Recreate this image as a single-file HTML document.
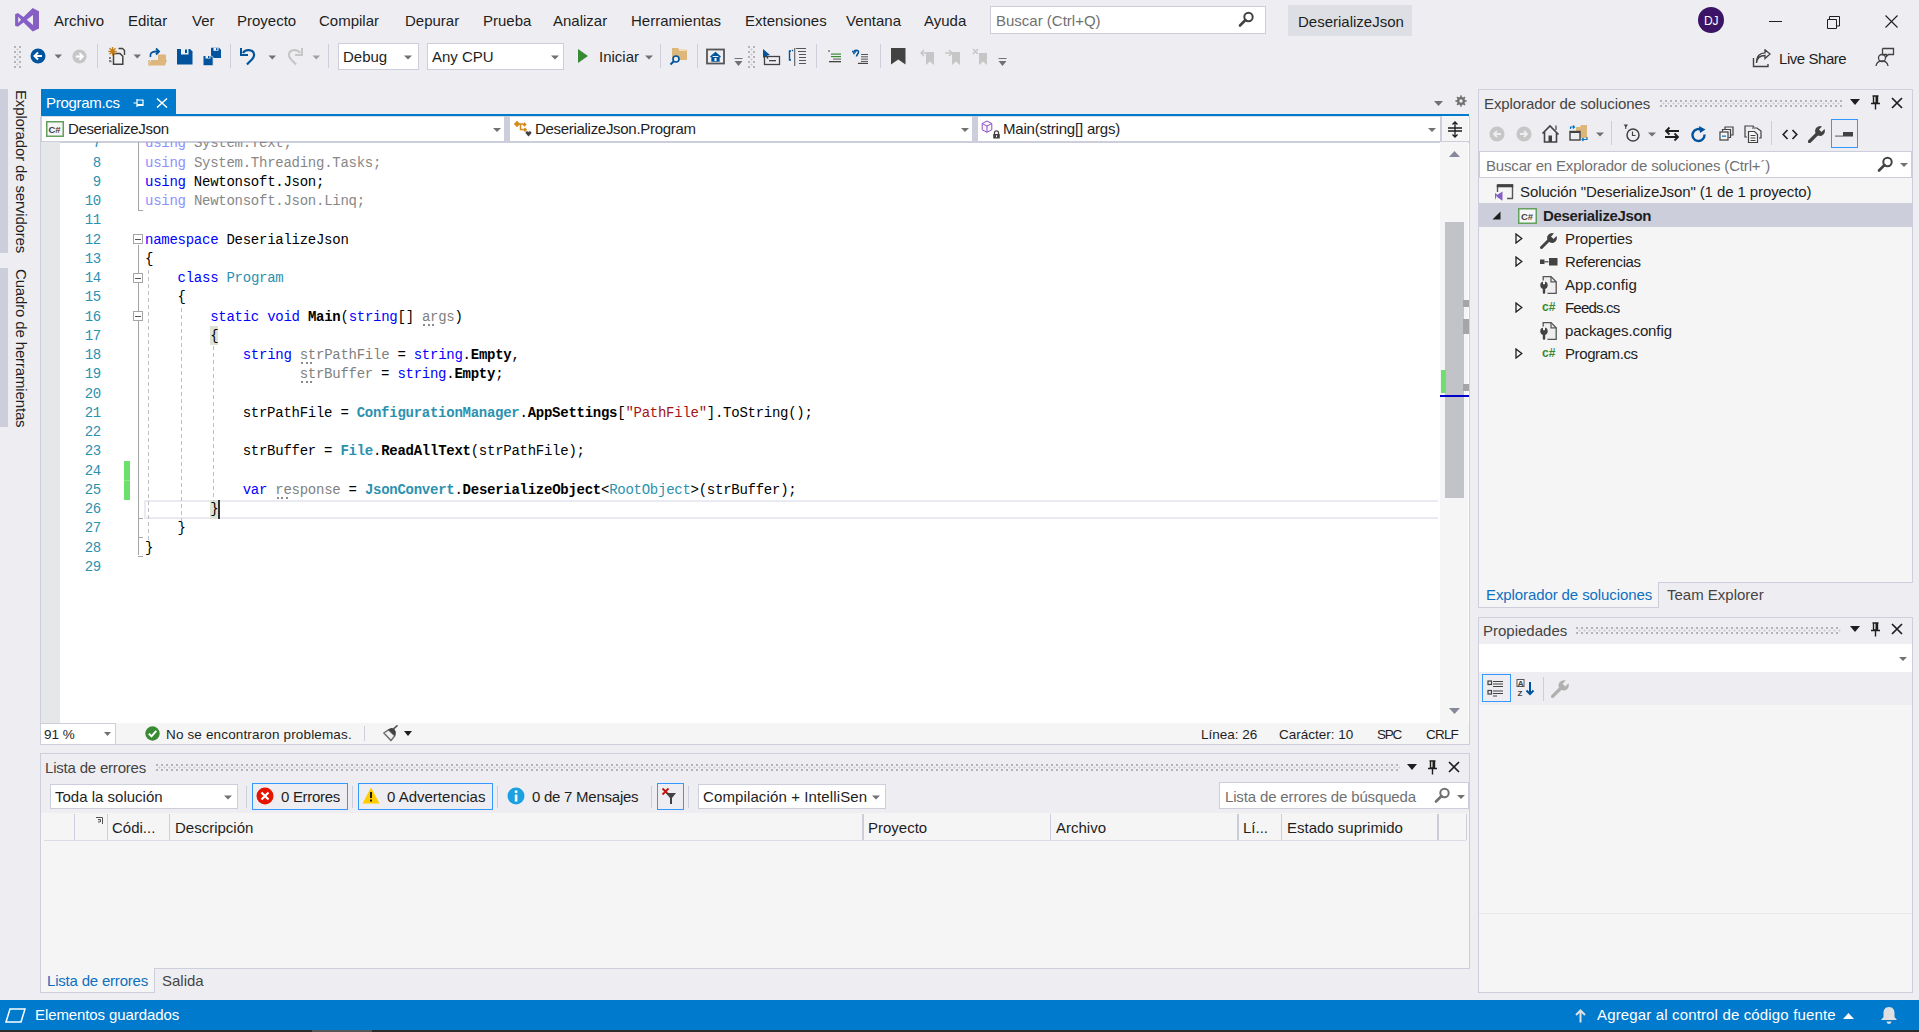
<!DOCTYPE html>
<html><head><meta charset="utf-8">
<style>
*{box-sizing:border-box;margin:0;padding:0}
html,body{width:1919px;height:1032px;overflow:hidden;background:#EEEEF2;font-family:"Liberation Sans",sans-serif;font-size:15px;color:#1E1E1E;position:relative}
.a{position:absolute}
.t{position:absolute;white-space:pre;line-height:1}
.cl{position:absolute;left:0;white-space:pre;font-family:"Liberation Mono",monospace;font-size:14px;letter-spacing:-0.26px;line-height:19px;color:#000}
.lnum{position:absolute;left:0;width:60px;text-align:right;font-family:"Liberation Mono",monospace;font-size:14px;letter-spacing:-0.26px;line-height:19px;color:#2B91AF}
.kw{color:#0000FF}
.ty{color:#2B91AF}
.st{color:#A31515}
.b{font-weight:bold}
.fk{color:#8F8FFF}
.fg{color:#878787}
.un{color:#7F7F7F}
.ico{position:absolute}
</style></head>
<body>
<!-- MENU BAR -->
<svg class="a" style="left:10px;top:4px" width="34" height="32" viewBox="0 0 34 32"><path d="M22.7 4 L29 7.3 V24.5 L22.7 27.6 L13.5 18.6 L7.8 22.8 L5.1 21.7 V10.2 L7.8 9 L13.5 13 Z M23 10.9 L16.8 15.8 L23 21.1 Z M8.2 12.7 V18.9 L11 15.8 Z" fill="#865FC5" fill-rule="evenodd"/></svg>
<span class="t" style="left:54px;top:13px">Archivo</span>
<span class="t" style="left:128px;top:13px">Editar</span>
<span class="t" style="left:192px;top:13px">Ver</span>
<span class="t" style="left:237px;top:13px">Proyecto</span>
<span class="t" style="left:319px;top:13px">Compilar</span>
<span class="t" style="left:405px;top:13px">Depurar</span>
<span class="t" style="left:483px;top:13px">Prueba</span>
<span class="t" style="left:553px;top:13px">Analizar</span>
<span class="t" style="left:631px;top:13px">Herramientas</span>
<span class="t" style="left:745px;top:13px">Extensiones</span>
<span class="t" style="left:846px;top:13px">Ventana</span>
<span class="t" style="left:924px;top:13px">Ayuda</span>
<div class="a" style="left:990px;top:6px;width:276px;height:28px;background:#fff;border:1px solid #CCCEDB"></div>
<span class="t" style="left:996px;top:13px;color:#717171">Buscar (Ctrl+Q)</span>
<svg class="a" style="left:1238px;top:11px" width="17" height="17" viewBox="0 0 17 17"><circle cx="10.5" cy="6" r="4.2" fill="none" stroke="#424242" stroke-width="2"/><path d="M7.5 9 L2 14.5" stroke="#424242" stroke-width="2.6" stroke-linecap="round"/></svg>
<div class="a" style="left:1288px;top:5px;width:124px;height:31px;background:#DDDFE5"></div>
<span class="t" style="left:1298px;top:14px">DeserializeJson</span>
<div class="a" style="left:1698px;top:7px;width:26px;height:26px;border-radius:50%;background:#3B1466"></div>
<span class="t" style="left:1704px;top:15px;color:#fff;font-size:12px;letter-spacing:-0.2px">DJ</span>
<div class="a" style="left:1769px;top:21px;width:13px;height:1px;background:#1E1E1E"></div>
<svg class="a" style="left:1826px;top:15px" width="15" height="15" viewBox="0 0 15 15"><path d="M1.5 4.5 H10.5 V13.5 H1.5 Z M3.5 4.5 V1.5 H13.5 V11 H10.5" fill="none" stroke="#1E1E1E" stroke-width="1"/></svg>
<svg class="a" style="left:1885px;top:15px" width="13" height="13" viewBox="0 0 13 13"><path d="M0.5 0.5 L12.5 12.5 M12.5 0.5 L0.5 12.5" stroke="#1E1E1E" stroke-width="1.1"/></svg>
<!-- TOOLBAR -->
<div class="a" style="left:14px;top:46px;width:7px;height:22px;background-image:radial-gradient(circle at 1px 1px,#B4B4B8 0.9px,transparent 1.2px),radial-gradient(circle at 3.5px 3.5px,#CDCDD2 0.9px,transparent 1.2px);background-size:5px 5px"></div>
<!-- back -->
<svg class="a" style="left:29px;top:47px" width="18" height="18" viewBox="0 0 18 18"><circle cx="9" cy="9" r="7.5" fill="#00539C"/><path d="M13 9 H6 M9 5.5 L5.5 9 L9 12.5" stroke="#fff" stroke-width="2" fill="none"/></svg>
<svg class="a" style="left:54px;top:54px" width="9" height="5" viewBox="0 0 9 5"><path d="M0.5 0.5 H8 L4.25 4.5Z" fill="#717171"/></svg>
<svg class="a" style="left:71px;top:48px" width="17" height="17" viewBox="0 0 18 18"><circle cx="9" cy="9" r="7.5" fill="#C6C6C6"/><path d="M5 9 H12 M9 5.5 L12.5 9 L9 12.5" stroke="#fff" stroke-width="2" fill="none"/></svg>
<div class="a" style="left:97px;top:44px;width:1px;height:24px;background:#CCCEDB"></div>
<!-- new project -->
<svg class="a" style="left:107px;top:46px" width="20" height="20" viewBox="0 0 20 20"><path d="M11.5 2.5 H15.5 L17.5 4.5 V9" fill="none" stroke="#424242" stroke-width="1.4"/><path d="M6.5 7.5 H13 L15.8 10.3 V18.3 H6.5 Z" fill="#F0EFF1" stroke="#424242" stroke-width="1.5"/><path d="M3 11 V15.5 H5" fill="none" stroke="#424242" stroke-width="1.3" stroke-dasharray="2 1"/><path d="M5.5 1 V9.5 M1.3 5.3 H9.7 M2.5 2.3 L8.5 8.3 M8.5 2.3 L2.5 8.3" stroke="#C27D1A" stroke-width="1.3"/></svg>
<svg class="a" style="left:133px;top:54px" width="9" height="5" viewBox="0 0 9 5"><path d="M0.5 0.5 H8 L4.25 4.5Z" fill="#717171"/></svg>
<!-- open -->
<svg class="a" style="left:148px;top:47px" width="20" height="20" viewBox="0 0 20 20"><path d="M10 7.5 H17 Q18 7.5 18 8.5 V13 H10Z" fill="#DCB67A"/><path d="M3 13 H19 L17 18.5 H1Z" fill="#DCB67A"/><path d="M1 13 V18.5" stroke="#DCB67A" stroke-width="1.5"/><path d="M2.5 10 C1.5 6.5 4 4.5 8 4.5 H10" stroke="#00539C" stroke-width="1.8" fill="none"/><path d="M8 1.5 L11 4.5 L8 7.5" stroke="#00539C" stroke-width="1.8" fill="none"/></svg>
<!-- save -->
<svg class="a" style="left:177px;top:49px" width="16" height="16" viewBox="0 0 16 16"><path d="M0 0 H13 L15.5 2.5 V15.5 H0 Z" fill="#00539C"/><rect x="4" y="0" width="7.5" height="5.5" fill="#EEEEF2"/><rect x="8" y="0.5" width="2" height="3.5" fill="#00539C"/></svg>
<!-- save all -->
<svg class="a" style="left:203px;top:47px" width="19" height="19" viewBox="0 0 19 19"><path d="M8 0.8 H16 L18 2.8 V11 H8 Z" fill="#00539C"/><rect x="10.5" y="0.8" width="5" height="3" fill="#EEEEF2"/><rect x="13" y="1.2" width="1.4" height="2" fill="#00539C"/><path d="M0 8.5 H8 L10.2 10.7 V18.8 H0 Z" fill="#00539C" stroke="#EEEEF2" stroke-width="1"/><rect x="2.5" y="8.5" width="5" height="3" fill="#EEEEF2"/><rect x="5" y="9" width="1.4" height="2" fill="#00539C"/></svg>
<div class="a" style="left:230px;top:44px;width:1px;height:24px;background:#CCCEDB"></div>
<!-- undo -->
<svg class="a" style="left:240px;top:46px" width="18" height="20" viewBox="0 0 18 20"><path d="M3 7 C5 3 13 3 14 8 C15 12 11 14 7 18.5" stroke="#00539C" stroke-width="2.2" fill="none"/><path d="M1 2 V9 H8" stroke="#00539C" stroke-width="2" fill="none"/></svg>
<svg class="a" style="left:268px;top:55px" width="9" height="5" viewBox="0 0 9 5"><path d="M0.5 0.5 H8 L4.25 4.5Z" fill="#717171"/></svg>
<svg class="a" style="left:285px;top:46px" width="18" height="20" viewBox="0 0 18 20"><path d="M15 7 C13 3 5 3 4 8 C3 12 7 14 11 18.5" stroke="#C6C6C6" stroke-width="2.2" fill="none"/><path d="M17 2 V9 H10" stroke="#C6C6C6" stroke-width="2" fill="none"/></svg>
<svg class="a" style="left:312px;top:55px" width="9" height="5" viewBox="0 0 9 5"><path d="M0.5 0.5 H8 L4.25 4.5Z" fill="#A0A0A0"/></svg>
<div class="a" style="left:328px;top:44px;width:1px;height:24px;background:#CCCEDB"></div>
<!-- Debug combo -->
<div class="a" style="left:338px;top:43px;width:81px;height:27px;background:#fff;border:1px solid #CCCEDB"></div>
<span class="t" style="left:343px;top:49px">Debug</span>
<svg class="a" style="left:404px;top:55px" width="8" height="5" viewBox="0 0 8 5"><path d="M0 0.5 H8 L4 4.5Z" fill="#717171"/></svg>
<div class="a" style="left:427px;top:43px;width:137px;height:27px;background:#fff;border:1px solid #CCCEDB"></div>
<span class="t" style="left:432px;top:49px">Any CPU</span>
<svg class="a" style="left:551px;top:55px" width="8" height="5" viewBox="0 0 8 5"><path d="M0 0.5 H8 L4 4.5Z" fill="#717171"/></svg>
<!-- start -->
<svg class="a" style="left:577px;top:48px" width="12" height="16" viewBox="0 0 12 16"><path d="M1 1 L11 8 L1 15Z" fill="#388A34"/></svg>
<span class="t" style="left:599px;top:49px">Iniciar</span>
<svg class="a" style="left:645px;top:55px" width="8" height="5" viewBox="0 0 8 5"><path d="M0 0.5 H8 L4 4.5Z" fill="#717171"/></svg>
<div class="a" style="left:660px;top:44px;width:1px;height:24px;background:#CCCEDB"></div>
<!-- find in files -->
<svg class="a" style="left:669px;top:47px" width="20" height="19" viewBox="0 0 20 19"><path d="M3 1 H9 L10.5 3 H18 V13 H3 Z" fill="#DCB67A"/><rect x="10" y="2" width="7" height="2" fill="#F1DDB8"/><circle cx="7" cy="12" r="3" fill="#EEEEF2" stroke="#00539C" stroke-width="1.6"/><path d="M5 14 L1.5 17.5" stroke="#00539C" stroke-width="2"/></svg>
<div class="a" style="left:697px;top:44px;width:1px;height:24px;background:#CCCEDB"></div>
<!-- home window -->
<svg class="a" style="left:706px;top:48px" width="20" height="18" viewBox="0 0 20 18"><rect x="1" y="1.5" width="17" height="14" fill="none" stroke="#555" stroke-width="1.8"/><path d="M4.5 9 L9.5 4.5 L14.5 9 M6 8 V13 H13 V8" fill="#00539C" stroke="#00539C" stroke-width="1.3"/><rect x="8.5" y="10" width="2" height="3" fill="#fff"/></svg>
<svg class="a" style="left:734px;top:58px" width="9" height="9" viewBox="0 0 9 9"><rect x="0.5" y="0" width="8" height="1" fill="#717171"/><path d="M0.5 3 H8.5 L4.5 8Z" fill="#717171"/></svg>
<div class="a" style="left:748px;top:46px;width:7px;height:22px;background-image:radial-gradient(circle at 1px 1px,#B4B4B8 0.9px,transparent 1.2px),radial-gradient(circle at 3.5px 3.5px,#CDCDD2 0.9px,transparent 1.2px);background-size:5px 5px"></div>
<!-- select cursor icon -->
<svg class="a" style="left:762px;top:48px" width="19" height="18" viewBox="0 0 19 18"><path d="M1 1 L1 10 L3.5 8 L5.5 11 L6.5 10.5 L5 7.5 L8 7Z" fill="#00539C"/><rect x="2.5" y="8.5" width="15" height="8" fill="none" stroke="#424242" stroke-width="1.3"/><rect x="7" y="12" width="7" height="1.3" fill="#424242"/></svg>
<!-- bracket lines icon -->
<svg class="a" style="left:788px;top:47px" width="20" height="20" viewBox="0 0 20 20"><path d="M3 4 H1.5 V13 H3" stroke="#00539C" stroke-width="1.4" fill="none"/><path d="M4 4 L5 3" stroke="#00539C" stroke-width="1.2"/><rect x="6" y="1" width="1.3" height="18" fill="#717171"/><path d="M8 1.5 H18 M10 4.5 H18 M11 7.5 H18 M11 10.5 H18 M11 13.5 H18 M11 16.5 H18" stroke="#555" stroke-width="1.2"/></svg>
<div class="a" style="left:816px;top:44px;width:1px;height:24px;background:#CCCEDB"></div>
<!-- indent -->
<svg class="a" style="left:828px;top:50px" width="14" height="13" viewBox="0 0 14 13"><rect x="0" y="0.5" width="2" height="1" fill="#424242"/><rect x="3" y="3.5" width="10" height="1.2" fill="#388A34"/><rect x="3" y="6" width="10" height="1.2" fill="#388A34"/><rect x="5" y="8.5" width="8" height="1.2" fill="#717171"/><rect x="1" y="11" width="12" height="1.3" fill="#424242"/></svg>
<svg class="a" style="left:852px;top:49px" width="17" height="15" viewBox="0 0 17 15"><path d="M2 3 C2 0.8 6.5 0.5 6.5 3 C6.5 5 4.5 5.5 4.5 7.5" stroke="#00539C" stroke-width="1.6" fill="none"/><path d="M0.3 1.8 L2 4.8 L4.2 2" stroke="#00539C" stroke-width="1.2" fill="none"/><rect x="9" y="5" width="7" height="1" fill="#555"/><rect x="9" y="7.3" width="7" height="1" fill="#555"/><rect x="9" y="9.6" width="7" height="1" fill="#555"/><rect x="9" y="11.9" width="7" height="1" fill="#555"/><rect x="6" y="13.8" width="10" height="1.2" fill="#424242"/></svg>
<div class="a" style="left:880px;top:44px;width:1px;height:24px;background:#CCCEDB"></div>
<!-- bookmarks -->
<svg class="a" style="left:891px;top:48px" width="15" height="17" viewBox="0 0 15 17"><path d="M0 0 H14.5 V16.5 L7.25 11.5 L0 16.5Z" fill="#424242"/></svg>
<svg class="a" style="left:920px;top:48px" width="15" height="17" viewBox="0 0 15 17"><path d="M6 4 H14 V17 L10 13.5 L6 17Z" fill="#C6C6C6"/><path d="M7 5 H1 M4 2 L1 5 L4 8" stroke="#C6C6C6" stroke-width="1.5" fill="none"/></svg>
<svg class="a" style="left:945px;top:48px" width="16" height="17" viewBox="0 0 16 17"><path d="M7 4 H15 V17 L11 13.5 L7 17Z" fill="#C6C6C6"/><path d="M0 5 H7 M4 2 L7 5 L4 8" stroke="#C6C6C6" stroke-width="1.5" fill="none"/></svg>
<svg class="a" style="left:972px;top:48px" width="16" height="17" viewBox="0 0 16 17"><path d="M7 5 H15 V17 L11 13.5 L7 17Z" fill="#C6C6C6"/><path d="M1 1 L6 6 M6 1 L1 6" stroke="#C6C6C6" stroke-width="1.5"/></svg>
<svg class="a" style="left:998px;top:58px" width="9" height="9" viewBox="0 0 9 9"><rect x="0.5" y="0" width="8" height="1" fill="#717171"/><path d="M0.5 3 H8.5 L4.5 8Z" fill="#717171"/></svg>
<!-- live share -->
<svg class="a" style="left:1752px;top:49px" width="20" height="19" viewBox="0 0 20 19"><path d="M1.5 9 V17.5 H16 V15" stroke="#424242" stroke-width="1.4" fill="none"/><path d="M4.5 14 C5 8 9 6.5 13 6.5 V9.5 L18 5 L13 0.8 V3.8 C8 3.8 4.5 7 4.5 14Z" fill="none" stroke="#424242" stroke-width="1.3"/></svg>
<span class="t" style="left:1779px;top:51px;letter-spacing:-0.45px">Live Share</span>
<svg class="a" style="left:1875px;top:47px" width="20" height="20" viewBox="0 0 20 20"><circle cx="7" cy="11" r="3.5" fill="none" stroke="#424242" stroke-width="1.3"/><path d="M1 19 C1.5 15.5 4 14 7 14 C10 14 12.5 15.5 13 19" fill="none" stroke="#424242" stroke-width="1.3"/><path d="M7.5 1.5 H18.5 V7.5 H13.5 L11.5 9.5 V7.5 H7.5 V1.5" fill="none" stroke="#424242" stroke-width="1.3"/></svg>
<!-- LEFT SIDE TABS -->
<div class="a" style="left:0;top:89px;width:8px;height:164px;background:#CCCEDB"></div>
<div class="a" style="left:0;top:268px;width:8px;height:159px;background:#CCCEDB"></div>
<span class="t" style="left:29px;top:90px;transform-origin:0 0;transform:rotate(90deg);letter-spacing:-0.15px">Explorador de servidores</span>
<span class="t" style="left:29px;top:269px;transform-origin:0 0;transform:rotate(90deg);letter-spacing:-0.15px">Cuadro de herramientas</span>
<!-- DOC TAB -->
<div class="a" style="left:41px;top:89px;width:135px;height:27px;background:#007ACC"></div>
<span class="t" style="left:46px;top:95px;color:#fff;letter-spacing:-0.3px">Program.cs</span>
<div class="a" style="left:41px;top:114px;width:1428px;height:2px;background:#007ACC"></div>
<!-- nav bar -->
<div class="a" style="left:40px;top:116px;width:1430px;height:27px;background:#fff;border-left:2px solid #CCCEDB;border-right:1px solid #CCCEDB;border-bottom:2px solid #CCCEDB"></div>
<div class="a" style="left:40px;top:116px;width:1430px;height:1px;background:#DADCE3"></div>
<div class="a" style="left:504px;top:116px;width:6px;height:25px;background:#CCCEDB"></div>
<div class="a" style="left:972px;top:116px;width:6px;height:25px;background:#CCCEDB"></div>
<div class="a" style="left:1440px;top:116px;width:2px;height:25px;background:#CCCEDB"></div>
<div class="a" style="left:1442px;top:116px;width:26px;height:25px;background:#F5F5F5"></div>
<span class="t" style="left:68px;top:121px;letter-spacing:-0.35px">DeserializeJson</span>
<span class="t" style="left:535px;top:121px;letter-spacing:-0.3px">DeserializeJson.Program</span>
<span class="t" style="left:1003px;top:121px;letter-spacing:-0.2px">Main(string[] args)</span>
<!-- editor -->
<div class="a" style="left:40px;top:143px;width:1430px;height:580px;background:#fff;border-left:1px solid #CCCEDB;border-right:1px solid #CCCEDB"></div>
<!-- scrollbar -->
<div class="a" style="left:1440px;top:142px;width:28px;height:581px;background:#F5F5F5"></div>
<div class="a" style="left:1445px;top:222px;width:19px;height:276px;background:#C2C3C9"></div>
<!-- editor status row -->
<div class="a" style="left:40px;top:723px;width:1430px;height:22px;background:#F5F5F5;border-left:1px solid #CCCEDB;border-right:1px solid #CCCEDB;border-bottom:1px solid #CCCEDB"></div>
<!-- tab icons -->
<svg class="a" style="left:133px;top:98px" width="11" height="10" viewBox="0 0 11 10"><path d="M0.5 5 H4 M4 1 V9 M4 2 H10 V7.5 H4" stroke="#fff" stroke-width="1.2" fill="none"/><rect x="4" y="6" width="6" height="1.5" fill="#fff"/></svg>
<svg class="a" style="left:156px;top:98px" width="12" height="10" viewBox="0 0 12 10"><path d="M1 0.5 L11 9.5 M11 0.5 L1 9.5" stroke="#fff" stroke-width="1.5"/></svg>
<!-- doc well dropdown + gear -->
<svg class="a" style="left:1434px;top:101px" width="9" height="5" viewBox="0 0 9 5"><path d="M0 0 H9 L4.5 5Z" fill="#717171"/></svg>
<svg class="a" style="left:1455px;top:95px" width="12" height="12" viewBox="0 0 14 14"><g fill="#717171"><circle cx="7" cy="7" r="4.6"/><rect x="6" y="0.5" width="2" height="13"/><rect x="0.5" y="6" width="13" height="2"/><rect x="6" y="0.5" width="2" height="13" transform="rotate(45 7 7)"/><rect x="6" y="0.5" width="2" height="13" transform="rotate(-45 7 7)"/></g><circle cx="7" cy="7" r="2" fill="#EEEEF2"/></svg>
<!-- nav icons -->
<svg class="a" style="left:46px;top:121px" width="18" height="16" viewBox="0 0 18 16"><rect x="0.75" y="0.75" width="16.5" height="14.5" fill="#F6F6F6" stroke="#62A05C" stroke-width="1.5"/><text x="2.5" y="11.5" font-family="Liberation Sans" font-size="9.5" font-weight="bold" fill="#424242">C#</text></svg>
<svg class="a" style="left:493px;top:128px" width="8" height="4" viewBox="0 0 8 4"><path d="M0 0 H8 L4 4Z" fill="#717171"/></svg>
<svg class="a" style="left:512px;top:119px" width="20" height="20" viewBox="0 0 20 20"><path d="M5 1.8 L8.2 5 L5 8.2 L1.8 5Z" fill="#D48A1C"/><path d="M5 5 H11 M8.5 5 V10.5 H11" stroke="#D48A1C" stroke-width="1.5" fill="none"/><path d="M12.5 3.3 L14.7 5.5 L12.5 7.7 L10.3 5.5Z M13 8.5 L15.2 10.7 L13 12.9 L10.8 10.7Z" fill="#D48A1C"/><path d="M16.5 17.5 L13.8 14.6 A1.5 1.5 0 0 1 16.5 13 A1.5 1.5 0 0 1 19.2 14.6Z" fill="#424242"/></svg>
<svg class="a" style="left:961px;top:128px" width="8" height="4" viewBox="0 0 8 4"><path d="M0 0 H8 L4 4Z" fill="#717171"/></svg>
<svg class="a" style="left:981px;top:120px" width="20" height="19" viewBox="0 0 20 19"><path d="M6 1 L10.8 3.5 V9.8 L6 12.3 L1.2 9.8 V3.5Z M1.2 3.5 L6 6 L10.8 3.5 M6 6 V12.3" fill="#F6F6F6" stroke="#8E50C8" stroke-width="1"/><rect x="12.2" y="14" width="6.6" height="4.5" rx="0.5" fill="#424242"/><path d="M13.5 14 V12.8 A2 2 0 0 1 17.5 12.8 V14" stroke="#424242" stroke-width="1.3" fill="none"/><rect x="15" y="15.3" width="1" height="1.8" fill="#fff"/></svg>
<svg class="a" style="left:1428px;top:128px" width="8" height="4" viewBox="0 0 8 4"><path d="M0 0 H8 L4 4Z" fill="#717171"/></svg>
<svg class="a" style="left:1447px;top:121px" width="16" height="17" viewBox="0 0 16 17"><path d="M1 7 H15 M1 10 H15" stroke="#1E1E1E" stroke-width="1.4"/><path d="M8 1 V16 M5.5 3.5 L8 1 L10.5 3.5 M5.5 13.5 L8 16 L10.5 13.5" stroke="#1E1E1E" stroke-width="1.3" fill="none"/></svg>
<!-- scrollbar arrows + markers -->
<svg class="a" style="left:1449px;top:151px" width="11" height="6" viewBox="0 0 11 6"><path d="M0 6 L5.5 0 L11 6Z" fill="#868999"/></svg>
<svg class="a" style="left:1449px;top:708px" width="11" height="6" viewBox="0 0 11 6"><path d="M0 0 L5.5 6 L11 0Z" fill="#868999"/></svg>
<div class="a" style="left:1463px;top:300px;width:6px;height:7px;background:#A5A5A5"></div>
<div class="a" style="left:1463px;top:319px;width:6px;height:15px;background:#A5A5A5"></div>
<div class="a" style="left:1463px;top:384px;width:6px;height:7px;background:#A5A5A5"></div>
<div class="a" style="left:1441px;top:370px;width:5px;height:23px;background:#6CE06C"></div>
<div class="a" style="left:1440px;top:395px;width:29px;height:2px;background:#0000CD"></div>
<div class="a" style="left:41px;top:142px;width:1399px;height:581px;overflow:hidden">
<div class="a" style="left:0;top:0;width:19px;height:581px;background:#E6E7E8"></div>
<div class="a" style="left:103px;top:358px;width:1294px;height:19px;border:2px solid #EAEAF2;border-right:none"></div>
<div class="a" style="left:83px;top:319px;width:6px;height:39px;background:#6CE06C"></div>
<div class="a" style="left:83px;top:338px;width:6px;height:1px;background:#8EE88E"></div>
<div class="a" style="left:169px;top:184px;width:8px;height:19px;background:#DFE3D3"></div>
<div class="a" style="left:169px;top:358px;width:8px;height:19px;background:#DFE3D3"></div>
<div class="a" style="left:177px;top:358px;width:2px;height:19px;background:#333"></div>
<div class="a" style="left:107px;top:128px;width:1px;height:270px;background:repeating-linear-gradient(to bottom,#BFBFBF 0 4px,transparent 4px 7px)"></div>
<div class="a" style="left:140px;top:166px;width:1px;height:213px;background:repeating-linear-gradient(to bottom,#BFBFBF 0 4px,transparent 4px 7px)"></div>
<div class="a" style="left:172px;top:204px;width:1px;height:155px;background:repeating-linear-gradient(to bottom,#BFBFBF 0 4px,transparent 4px 7px)"></div>
<div class="a" style="left:97px;top:0px;width:1px;height:69px;background:#A5A5A5"></div>
<div class="a" style="left:97px;top:68px;width:5px;height:1px;background:#A5A5A5"></div>
<div class="a" style="left:97px;top:103px;width:1px;height:310px;background:#A5A5A5"></div>
<div class="a" style="left:97px;top:376px;width:5px;height:1px;background:#A5A5A5"></div>
<div class="a" style="left:97px;top:395px;width:5px;height:1px;background:#A5A5A5"></div>
<div class="a" style="left:97px;top:414px;width:5px;height:1px;background:#A5A5A5"></div>
<div class="a" style="left:92px;top:92px;width:10px;height:10px;border:1px solid #A5A5A5;background:#fff"><div class="a" style="left:1px;top:4px;width:6px;height:1px;background:#555"></div></div>
<div class="a" style="left:92px;top:131px;width:10px;height:10px;border:1px solid #A5A5A5;background:#fff"><div class="a" style="left:1px;top:4px;width:6px;height:1px;background:#555"></div></div>
<div class="a" style="left:92px;top:169px;width:10px;height:10px;border:1px solid #A5A5A5;background:#fff"><div class="a" style="left:1px;top:4px;width:6px;height:1px;background:#555"></div></div>
<div class="a" style="left:382px;top:182px;width:2px;height:2px;background:#8A8A8A"></div><div class="a" style="left:387px;top:182px;width:2px;height:2px;background:#8A8A8A"></div><div class="a" style="left:391px;top:182px;width:2px;height:2px;background:#8A8A8A"></div>
<div class="a" style="left:260px;top:220px;width:2px;height:2px;background:#8A8A8A"></div><div class="a" style="left:265px;top:220px;width:2px;height:2px;background:#8A8A8A"></div><div class="a" style="left:269px;top:220px;width:2px;height:2px;background:#8A8A8A"></div>
<div class="a" style="left:260px;top:239px;width:2px;height:2px;background:#8A8A8A"></div><div class="a" style="left:265px;top:239px;width:2px;height:2px;background:#8A8A8A"></div><div class="a" style="left:269px;top:239px;width:2px;height:2px;background:#8A8A8A"></div>
<div class="a" style="left:236px;top:355px;width:2px;height:2px;background:#8A8A8A"></div><div class="a" style="left:240px;top:355px;width:2px;height:2px;background:#8A8A8A"></div><div class="a" style="left:245px;top:355px;width:2px;height:2px;background:#8A8A8A"></div>
<div class="lnum" style="top:-7.75px">7</div>
<div class="cl" style="left:104px;top:-7.75px"><span class="fk">using</span> <span class="fg">System.Text;</span></div>
<div class="lnum" style="top:11.5px">8</div>
<div class="cl" style="left:104px;top:11.5px"><span class="fk">using</span> <span class="fg">System.Threading.Tasks;</span></div>
<div class="lnum" style="top:30.75px">9</div>
<div class="cl" style="left:104px;top:30.75px"><span class="kw">using</span> Newtonsoft.Json;</div>
<div class="lnum" style="top:50.0px">10</div>
<div class="cl" style="left:104px;top:50.0px"><span class="fk">using</span> <span class="fg">Newtonsoft.Json.Linq;</span></div>
<div class="lnum" style="top:69.25px">11</div>
<div class="lnum" style="top:88.5px">12</div>
<div class="cl" style="left:104px;top:88.5px"><span class="kw">namespace</span> DeserializeJson</div>
<div class="lnum" style="top:107.75px">13</div>
<div class="cl" style="left:104px;top:107.75px">{</div>
<div class="lnum" style="top:127.0px">14</div>
<div class="cl" style="left:104px;top:127.0px">    <span class="kw">class</span> <span class="ty">Program</span></div>
<div class="lnum" style="top:146.25px">15</div>
<div class="cl" style="left:104px;top:146.25px">    {</div>
<div class="lnum" style="top:165.5px">16</div>
<div class="cl" style="left:104px;top:165.5px">        <span class="kw">static</span> <span class="kw">void</span> <span class="b">Main</span>(<span class="kw">string</span>[] <span class="un">args</span>)</div>
<div class="lnum" style="top:184.75px">17</div>
<div class="cl" style="left:104px;top:184.75px">        {</div>
<div class="lnum" style="top:204.0px">18</div>
<div class="cl" style="left:104px;top:204.0px">            <span class="kw">string</span> <span class="un">strPathFile</span> = <span class="kw">string</span>.<span class="b">Empty</span>,</div>
<div class="lnum" style="top:223.25px">19</div>
<div class="cl" style="left:104px;top:223.25px">                   <span class="un">strBuffer</span> = <span class="kw">string</span>.<span class="b">Empty</span>;</div>
<div class="lnum" style="top:242.5px">20</div>
<div class="lnum" style="top:261.75px">21</div>
<div class="cl" style="left:104px;top:261.75px">            strPathFile = <span class="ty b">ConfigurationManager</span>.<span class="b">AppSettings</span>[<span class="st">"PathFile"</span>].ToString();</div>
<div class="lnum" style="top:281.0px">22</div>
<div class="lnum" style="top:300.25px">23</div>
<div class="cl" style="left:104px;top:300.25px">            strBuffer = <span class="ty b">File</span>.<span class="b">ReadAllText</span>(strPathFile);</div>
<div class="lnum" style="top:319.5px">24</div>
<div class="lnum" style="top:338.75px">25</div>
<div class="cl" style="left:104px;top:338.75px">            <span class="kw">var</span> <span class="un">response</span> = <span class="ty b">JsonConvert</span>.<span class="b">DeserializeObject</span>&lt;<span class="ty">RootObject</span>&gt;(strBuffer);</div>
<div class="lnum" style="top:358.0px">26</div>
<div class="cl" style="left:104px;top:358.0px">        }</div>
<div class="lnum" style="top:377.25px">27</div>
<div class="cl" style="left:104px;top:377.25px">    }</div>
<div class="lnum" style="top:396.5px">28</div>
<div class="cl" style="left:104px;top:396.5px">}</div>
<div class="lnum" style="top:415.75px">29</div>
</div>
<!-- EDITOR STATUS ROW -->
<div class="a" style="left:40px;top:723px;width:76px;height:22px;background:#fff;border:1px solid #CCCEDB"></div>
<span class="t" style="left:44px;top:728px;font-size:13.5px">91 %</span>
<svg class="a" style="left:104px;top:732px" width="7" height="4" viewBox="0 0 7 4"><path d="M0 0 H7 L3.5 4Z" fill="#717171"/></svg>
<svg class="a" style="left:145px;top:726px" width="15" height="15" viewBox="0 0 15 15"><circle cx="7.5" cy="7.5" r="7.2" fill="#388A34"/><path d="M3.8 7.6 L6.5 10.3 L11.3 4.8" stroke="#fff" stroke-width="2" fill="none"/></svg>
<span class="t" style="left:166px;top:728px;font-size:13.5px;letter-spacing:0.15px">No se encontraron problemas.</span>
<div class="a" style="left:364px;top:726px;width:1px;height:15px;background:#CCCEDB"></div>
<svg class="a" style="left:382px;top:725px" width="17" height="17" viewBox="0 0 17 17"><path d="M1.8 8 L6.5 4.8 L12.8 10.8 L9 15.6Z" fill="#F0F0F0" stroke="#6D6D6D" stroke-width="1.5" stroke-linejoin="round"/><path d="M6.2 4.6 Q9 1.8 12.5 4.2 Q15 7.5 13 11Z" fill="#424242"/><path d="M11.5 3.8 L15 0.8" stroke="#555" stroke-width="1.6" stroke-linecap="round"/></svg>
<svg class="a" style="left:404px;top:731px" width="8" height="5" viewBox="0 0 8 5"><path d="M0 0 H8 L4 5Z" fill="#1E1E1E"/></svg>
<span class="t" style="left:1201px;top:728px;font-size:13.5px">Línea: 26</span>
<span class="t" style="left:1279px;top:728px;font-size:13.5px">Carácter: 10</span>
<span class="t" style="left:1377px;top:728px;font-size:13.5px;letter-spacing:-1.2px">SPC</span>
<span class="t" style="left:1426px;top:728px;font-size:13.5px;letter-spacing:-0.8px">CRLF</span>
<!-- ERROR LIST PANEL -->
<div class="a" style="left:40px;top:753px;width:1430px;height:216px;background:#F5F5F5;border:1px solid #CCCEDB;border-bottom:none"></div>
<div class="a" style="left:41px;top:754px;width:1428px;height:26px;background:#EEEEF2"></div>
<span class="t" style="left:45px;top:760px;color:#444;letter-spacing:-0.2px">Lista de errores</span>
<div class="a" style="left:156px;top:764px;width:1244px;height:7px;background-image:radial-gradient(circle at 1px 1px,#B4B4B8 0.9px,transparent 1.2px),radial-gradient(circle at 3.5px 3.5px,#CDCDD2 0.9px,transparent 1.2px);background-size:5px 5px"></div>
<svg class="a" style="left:1407px;top:764px" width="10" height="6" viewBox="0 0 10 6"><path d="M0 0 H10 L5 6Z" fill="#1E1E1E"/></svg>
<svg class="a" style="left:1427px;top:760px" width="11" height="15" viewBox="0 0 11 15"><path d="M2.5 1 H8.5 M3.5 1 V8 H7.5 V1 M1 8.5 H10 M5.5 8.5 V14.5" stroke="#1E1E1E" stroke-width="1.4" fill="none"/><rect x="5.5" y="1" width="2" height="7" fill="#1E1E1E"/></svg>
<svg class="a" style="left:1448px;top:761px" width="12" height="12" viewBox="0 0 12 12"><path d="M1 1 L11 11 M11 1 L1 11" stroke="#1E1E1E" stroke-width="1.7"/></svg>
<div class="a" style="left:41px;top:780px;width:1428px;height:33px;background:#EEEEF2"></div>
<div class="a" style="left:50px;top:784px;width:188px;height:25px;background:#fff;border:1px solid #CCCEDB"></div>
<span class="t" style="left:55px;top:789px">Toda la solución</span>
<svg class="a" style="left:224px;top:795px" width="8" height="5" viewBox="0 0 8 5"><path d="M0 0.5 H8 L4 4.5Z" fill="#717171"/></svg>
<div class="a" style="left:246px;top:786px;width:1px;height:22px;background:#CCCEDB"></div>
<div class="a" style="left:252px;top:783px;width:96px;height:27px;border:1px solid #3399FF"></div>
<svg class="a" style="left:256px;top:787px" width="18" height="18" viewBox="0 0 18 18"><circle cx="9" cy="9" r="8.5" fill="#E51400"/><path d="M5.5 5.5 L12.5 12.5 M12.5 5.5 L5.5 12.5" stroke="#fff" stroke-width="2.2"/></svg>
<span class="t" style="left:281px;top:789px;letter-spacing:-0.3px">0 Errores</span>
<div class="a" style="left:352px;top:786px;width:1px;height:22px;background:#CCCEDB"></div>
<div class="a" style="left:358px;top:783px;width:135px;height:27px;border:1px solid #3399FF"></div>
<svg class="a" style="left:362px;top:787px" width="18" height="17" viewBox="0 0 18 17"><path d="M9 0.5 L17.5 16.5 H0.5Z" fill="#FFCC00"/><path d="M9 5 V11" stroke="#1E1E1E" stroke-width="2"/><rect x="8" y="12.5" width="2" height="2" fill="#1E1E1E"/></svg>
<span class="t" style="left:387px;top:789px">0 Advertencias</span>
<div class="a" style="left:497px;top:786px;width:1px;height:22px;background:#CCCEDB"></div>
<svg class="a" style="left:507px;top:787px" width="18" height="18" viewBox="0 0 18 18"><circle cx="9" cy="9" r="8.5" fill="#1BA1E2"/><rect x="7.8" y="7.5" width="2.6" height="7" fill="#fff"/><rect x="7.8" y="3.5" width="2.6" height="2.5" fill="#fff"/></svg>
<span class="t" style="left:532px;top:789px;letter-spacing:-0.25px">0 de 7 Mensajes</span>
<div class="a" style="left:651px;top:786px;width:1px;height:22px;background:#CCCEDB"></div>
<div class="a" style="left:657px;top:783px;width:27px;height:27px;border:1px solid #3399FF"></div>
<svg class="a" style="left:661px;top:787px" width="18" height="18" viewBox="0 0 18 18"><path d="M1.5 1.5 L7.5 7.5 M7.5 1.5 L1.5 7.5" stroke="#C5140D" stroke-width="1.8"/><path d="M5 6 H15 L11 11 V17 H9 V11Z" fill="#424242"/></svg>
<div class="a" style="left:688px;top:786px;width:1px;height:22px;background:#CCCEDB"></div>
<div class="a" style="left:698px;top:784px;width:188px;height:25px;background:#fff;border:1px solid #CCCEDB"></div>
<span class="t" style="left:703px;top:789px;letter-spacing:0.12px">Compilación + IntelliSen</span>
<svg class="a" style="left:872px;top:795px" width="8" height="5" viewBox="0 0 8 5"><path d="M0 0.5 H8 L4 4.5Z" fill="#717171"/></svg>
<div class="a" style="left:1219px;top:782px;width:250px;height:27px;background:#fff;border:1px solid #CCCEDB"></div>
<span class="t" style="left:1225px;top:789px;color:#717171;letter-spacing:-0.15px">Lista de errores de búsqueda</span>
<svg class="a" style="left:1434px;top:787px" width="17" height="17" viewBox="0 0 17 17"><circle cx="10.5" cy="6" r="4.2" fill="none" stroke="#717171" stroke-width="2"/><path d="M7.5 9 L2 14.5" stroke="#717171" stroke-width="2.6" stroke-linecap="round"/></svg>
<svg class="a" style="left:1457px;top:795px" width="8" height="4" viewBox="0 0 8 4"><path d="M0 0 H8 L4 4Z" fill="#717171"/></svg>
<!-- table header -->
<div class="a" style="left:44px;top:840px;width:1422px;height:1px;background:#DADCE3"></div>
<div class="a" style="left:74px;top:814px;width:1px;height:26px;background:#CCCEDB"></div>
<div class="a" style="left:107px;top:814px;width:1px;height:26px;background:#CCCEDB"></div>
<div class="a" style="left:169px;top:814px;width:1px;height:26px;background:#CCCEDB"></div>
<div class="a" style="left:862px;top:814px;width:2px;height:26px;background:#CCCEDB"></div>
<div class="a" style="left:1050px;top:814px;width:1px;height:26px;background:#CCCEDB"></div>
<div class="a" style="left:1237px;top:814px;width:2px;height:26px;background:#CCCEDB"></div>
<div class="a" style="left:1281px;top:814px;width:1px;height:26px;background:#CCCEDB"></div>
<div class="a" style="left:1437px;top:814px;width:2px;height:26px;background:#CCCEDB"></div>
<div class="a" style="left:1466px;top:814px;width:1px;height:26px;background:#CCCEDB"></div>
<svg class="a" style="left:96px;top:817px" width="7" height="7" viewBox="0 0 7 7"><path d="M0 0.5 H6.5 V7 M2 2.5 H4.5 V5 M3 3.5 V6" stroke="#555" stroke-width="1" fill="none"/></svg>
<span class="t" style="left:112px;top:820px">Códi...</span>
<span class="t" style="left:175px;top:820px">Descripción</span>
<span class="t" style="left:868px;top:820px">Proyecto</span>
<span class="t" style="left:1056px;top:820px">Archivo</span>
<span class="t" style="left:1243px;top:820px">Lí...</span>
<span class="t" style="left:1287px;top:820px">Estado suprimido</span>
<!-- bottom tabs -->
<div class="a" style="left:40px;top:968px;width:115px;height:25px;background:#F5F5F5;border:1px solid #CCCEDB;border-top:none"></div>
<div class="a" style="left:154px;top:968px;width:1316px;height:1px;background:#CCCEDB"></div>
<div class="a" style="left:1469px;top:753px;width:1px;height:216px;background:#CCCEDB"></div>
<span class="t" style="left:47px;top:973px;color:#0E70C0;letter-spacing:-0.2px">Lista de errores</span>
<span class="t" style="left:162px;top:973px;color:#444">Salida</span>
<!-- SOLUTION EXPLORER -->
<div class="a" style="left:1478px;top:89px;width:435px;height:494px;background:#F5F5F5;border:1px solid #CCCEDB"></div>
<div class="a" style="left:1479px;top:90px;width:433px;height:61px;background:#EEEEF2"></div>
<span class="t" style="left:1484px;top:96px;color:#444;letter-spacing:-0.1px">Explorador de soluciones</span>
<div class="a" style="left:1660px;top:100px;width:182px;height:7px;background-image:radial-gradient(circle at 1px 1px,#B4B4B8 0.9px,transparent 1.2px),radial-gradient(circle at 3.5px 3.5px,#CDCDD2 0.9px,transparent 1.2px);background-size:5px 5px"></div>
<svg class="a" style="left:1850px;top:99px" width="10" height="6" viewBox="0 0 10 6"><path d="M0 0 H10 L5 6Z" fill="#1E1E1E"/></svg>
<svg class="a" style="left:1870px;top:95px" width="11" height="15" viewBox="0 0 11 15"><path d="M2.5 1 H8.5 M3.5 1 V8 H7.5 V1 M1 8.5 H10 M5.5 8.5 V14.5" stroke="#1E1E1E" stroke-width="1.4" fill="none"/><rect x="5.5" y="1" width="2" height="7" fill="#1E1E1E"/></svg>
<svg class="a" style="left:1891px;top:97px" width="12" height="12" viewBox="0 0 12 12"><path d="M1 1 L11 11 M11 1 L1 11" stroke="#1E1E1E" stroke-width="1.7"/></svg>
<!-- toolbar -->
<svg class="a" style="left:1489px;top:126px" width="16" height="16" viewBox="0 0 18 18"><circle cx="9" cy="9" r="8.5" fill="#C6C6C6"/><path d="M13.5 9 H6 M9 5.5 L5.5 9 L9 12.5" stroke="#EEEEF2" stroke-width="2" fill="none"/></svg>
<svg class="a" style="left:1516px;top:126px" width="16" height="16" viewBox="0 0 18 18"><circle cx="9" cy="9" r="8.5" fill="#C6C6C6"/><path d="M4.5 9 H12 M9 5.5 L12.5 9 L9 12.5" stroke="#EEEEF2" stroke-width="2" fill="none"/></svg>
<svg class="a" style="left:1541px;top:124px" width="19" height="19" viewBox="0 0 19 19"><path d="M1.5 9.5 L9 2 L17.5 10.5 M3.5 8 V18 H15.5 V8" fill="none" stroke="#424242" stroke-width="1.6"/><rect x="7.5" y="11.5" width="3.5" height="6.5" fill="#424242"/><path d="M15 1.5 V6" stroke="#424242" stroke-width="1.2"/></svg>
<svg class="a" style="left:1569px;top:124px" width="20" height="18" viewBox="0 0 20 18"><path d="M7 3 H11 L12 1 H18 V14 H7Z" fill="#DCB67A"/><rect x="1" y="7.5" width="10" height="8.5" fill="#EEEEF2" stroke="#424242" stroke-width="1.4"/><rect x="1" y="7" width="10" height="2" fill="#424242"/><path d="M1.5 5 V3 H5 M4 1.5 L5.5 3 L4 4.5" stroke="#007ACC" stroke-width="1.2" fill="none"/><path d="M18 13 V15.5 H13 M14.5 14 L13 15.5 L14.5 17" stroke="#007ACC" stroke-width="1.2" fill="none"/></svg>
<svg class="a" style="left:1596px;top:132px" width="8" height="5" viewBox="0 0 8 5"><path d="M0 0.5 H8 L4 4.5Z" fill="#717171"/></svg>
<div class="a" style="left:1611px;top:121px;width:1px;height:24px;background:#CCCEDB"></div>
<svg class="a" style="left:1623px;top:124px" width="18" height="18" viewBox="0 0 18 18"><path d="M0.5 0.5 H5 L3 3.5Z" fill="#424242"/><path d="M2.75 2 V5" stroke="#424242" stroke-width="1"/><circle cx="10" cy="11" r="6" fill="none" stroke="#424242" stroke-width="1.5"/><path d="M9.5 7.5 V11.5 H12.5" stroke="#424242" stroke-width="1.2" fill="none"/></svg>
<svg class="a" style="left:1648px;top:132px" width="8" height="5" viewBox="0 0 8 5"><path d="M0 0.5 H8 L4 4.5Z" fill="#717171"/></svg>
<svg class="a" style="left:1664px;top:126px" width="16" height="16" viewBox="0 0 16 16"><path d="M15 5 H2 M5.5 1.5 L2 5 L5.5 8.5" stroke="#1E1E1E" stroke-width="1.8" fill="none"/><path d="M1 11 H14 M10.5 7.5 L14 11 L10.5 14.5" stroke="#1E1E1E" stroke-width="1.8" fill="none"/></svg>
<svg class="a" style="left:1691px;top:125px" width="16" height="18" viewBox="0 0 16 18"><path d="M11.5 5.5 A6 6 0 1 0 13.5 9.5" stroke="#00539C" stroke-width="2.4" fill="none"/><path d="M8 1 L14.5 4.5 L9 8Z" fill="#00539C"/></svg>
<svg class="a" style="left:1719px;top:126px" width="15" height="15" viewBox="0 0 15 15"><rect x="1" y="6" width="8" height="8" fill="#F6F6F6" stroke="#424242" stroke-width="1.2"/><path d="M3.5 5.5 V3.5 H11.5 V11.5 H9.5 M6 3 V1 H14 V9 H12" fill="none" stroke="#424242" stroke-width="1.2"/><rect x="3" y="9.5" width="4" height="1.3" fill="#007ACC"/></svg>
<svg class="a" style="left:1744px;top:125px" width="18" height="18" viewBox="0 0 18 18"><path d="M3 12 H1 V1 H9 L10 2" fill="none" stroke="#424242" stroke-width="1.2"/><path d="M8 3 H13 L17 6 V13 H15" fill="none" stroke="#424242" stroke-width="1.2"/><path d="M4.5 6.5 H10.5 L13.5 9.5 V17.5 H4.5Z" fill="#F6F6F6" stroke="#424242" stroke-width="1.2"/><rect x="6.5" y="10" width="5" height="1" fill="#424242"/><rect x="6.5" y="12.5" width="5" height="1" fill="#424242"/><rect x="6.5" y="15" width="5" height="1" fill="#424242"/></svg>
<div class="a" style="left:1771px;top:121px;width:1px;height:24px;background:#CCCEDB"></div>
<svg class="a" style="left:1782px;top:129px" width="16" height="11" viewBox="0 0 16 11"><path d="M5.5 1 L1.2 5.5 L5.5 10 M10.5 1 L14.8 5.5 L10.5 10" stroke="#1E1E1E" stroke-width="1.6" fill="none"/></svg>
<svg class="a" style="left:1808px;top:125px" width="18" height="18" viewBox="0 0 18 18"><path d="M1.5 16.5 L9 9" stroke="#424242" stroke-width="3.2" stroke-linecap="round"/><path d="M7.5 8 A5 5 0 0 1 14 1.5 L11 4.5 L13.5 7 L16.5 4 A5 5 0 0 1 10 10.5Z" fill="#424242"/></svg>
<div class="a" style="left:1831px;top:119px;width:27px;height:29px;border:1px solid #3399FF"></div>
<svg class="a" style="left:1835px;top:132px" width="19" height="5" viewBox="0 0 19 5"><rect x="0" y="3.5" width="8" height="1.2" fill="#717171"/><rect x="8" y="0" width="10" height="4.5" fill="#424242"/></svg>
<!-- search -->
<div class="a" style="left:1479px;top:151px;width:433px;height:27px;background:#fff;border:1px solid #CCCEDB"></div>
<span class="t" style="left:1486px;top:158px;color:#717171;letter-spacing:-0.17px">Buscar en Explorador de soluciones (Ctrl+´)</span>
<svg class="a" style="left:1877px;top:156px" width="17" height="17" viewBox="0 0 17 17"><circle cx="10.5" cy="6" r="4.2" fill="none" stroke="#424242" stroke-width="2"/><path d="M7.5 9 L2 14.5" stroke="#424242" stroke-width="2.6" stroke-linecap="round"/></svg>
<svg class="a" style="left:1900px;top:163px" width="8" height="4" viewBox="0 0 8 4"><path d="M0 0 H8 L4 4Z" fill="#717171"/></svg>
<!-- tree -->
<svg class="a" style="left:1494px;top:184px" width="20" height="18" viewBox="0 0 20 18"><path d="M3.5 1 H18.5 V14.5 H13" fill="none" stroke="#555" stroke-width="1.4"/><path d="M3.5 1 V8" stroke="#555" stroke-width="1.4"/><rect x="2.8" y="0.3" width="16.4" height="3" fill="#424242"/><path d="M1 9 L3.2 10.5 L1 16Z M3 11 L8.5 7.5 V16.8 L3 13Z" fill="#865FC5"/></svg>
<span class="t" style="left:1520px;top:184px;letter-spacing:-0.1px">Solución "DeserializeJson" (1 de 1 proyecto)</span>
<div class="a" style="left:1479px;top:203px;width:433px;height:24px;background:#CCCEDB"></div>
<svg class="a" style="left:1492px;top:211px" width="9" height="9" viewBox="0 0 9 9"><path d="M8.5 0.5 V8.5 H0.5Z" fill="#1E1E1E"/></svg>
<svg class="a" style="left:1518px;top:208px" width="19" height="16" viewBox="0 0 19 16"><rect x="0.75" y="0.75" width="17.5" height="14.5" fill="#F6F6F6" stroke="#62A05C" stroke-width="1.5"/><text x="3" y="11.5" font-family="Liberation Sans" font-size="9.5" font-weight="bold" fill="#424242">C#</text></svg>
<span class="t" style="left:1543px;top:208px;font-weight:bold;letter-spacing:-0.35px">DeserializeJson</span>
<svg class="a" style="left:1515px;top:233px" width="8" height="11" viewBox="0 0 8 11"><path d="M1 1 L6.8 5.5 L1 10Z" fill="none" stroke="#1E1E1E" stroke-width="1.3"/></svg>
<svg class="a" style="left:1540px;top:232px" width="18" height="17" viewBox="0 0 18 17"><path d="M1.5 15.5 L8.5 8.5" stroke="#424242" stroke-width="3" stroke-linecap="round"/><path d="M7.5 8 A5 5 0 0 1 14 1.5 L11 4.5 L13.5 7 L16.5 4 A5 5 0 0 1 10 10.5Z" fill="#424242"/></svg>
<span class="t" style="left:1565px;top:231px;letter-spacing:-0.1px">Properties</span>
<svg class="a" style="left:1515px;top:256px" width="8" height="11" viewBox="0 0 8 11"><path d="M1 1 L6.8 5.5 L1 10Z" fill="none" stroke="#1E1E1E" stroke-width="1.3"/></svg>
<svg class="a" style="left:1540px;top:258px" width="18" height="8" viewBox="0 0 18 8"><rect x="0" y="1.5" width="4.5" height="4.5" fill="#424242"/><rect x="4.5" y="3.2" width="4" height="1.2" fill="#424242"/><rect x="9" y="0" width="8.5" height="7.5" fill="#424242"/></svg>
<span class="t" style="left:1565px;top:254px;letter-spacing:-0.4px">Referencias</span>
<svg class="a" style="left:1540px;top:275px" width="18" height="20" viewBox="0 0 18 20"><path d="M3 1.5 H11 L16 6.5 V18.5 H4Z" fill="#EEEEEE"/><path d="M3.2 5.5 V1.6 H11 L16.2 6.8 V18.4 H7.5" fill="none" stroke="#555" stroke-width="1.3"/><path d="M11 1.6 V6.8 H16.2" fill="none" stroke="#555" stroke-width="1.2"/><circle cx="4" cy="10.2" r="3.7" fill="#424242"/><rect x="3" y="6" width="2" height="3.2" fill="#F5F5F5"/><rect x="2.8" y="12" width="2.4" height="6.8" rx="1" fill="#424242"/></svg>
<span class="t" style="left:1565px;top:277px;letter-spacing:0.1px">App.config</span>
<svg class="a" style="left:1515px;top:302px" width="8" height="11" viewBox="0 0 8 11"><path d="M1 1 L6.8 5.5 L1 10Z" fill="none" stroke="#1E1E1E" stroke-width="1.3"/></svg>
<span class="t" style="left:1542px;top:301px;font-size:12px;font-weight:bold;color:#388A34">c#</span>
<span class="t" style="left:1565px;top:300px;letter-spacing:-0.8px">Feeds.cs</span>
<svg class="a" style="left:1540px;top:321px" width="18" height="20" viewBox="0 0 18 20"><path d="M3 1.5 H11 L16 6.5 V18.5 H4Z" fill="#EEEEEE"/><path d="M3.2 5.5 V1.6 H11 L16.2 6.8 V18.4 H7.5" fill="none" stroke="#555" stroke-width="1.3"/><path d="M11 1.6 V6.8 H16.2" fill="none" stroke="#555" stroke-width="1.2"/><circle cx="4" cy="10.2" r="3.7" fill="#424242"/><rect x="3" y="6" width="2" height="3.2" fill="#F5F5F5"/><rect x="2.8" y="12" width="2.4" height="6.8" rx="1" fill="#424242"/></svg>
<span class="t" style="left:1565px;top:323px;letter-spacing:-0.1px">packages.config</span>
<svg class="a" style="left:1515px;top:348px" width="8" height="11" viewBox="0 0 8 11"><path d="M1 1 L6.8 5.5 L1 10Z" fill="none" stroke="#1E1E1E" stroke-width="1.3"/></svg>
<span class="t" style="left:1542px;top:347px;font-size:12px;font-weight:bold;color:#388A34">c#</span>
<span class="t" style="left:1565px;top:346px;letter-spacing:-0.4px">Program.cs</span>
<!-- tabs under -->
<div class="a" style="left:1478px;top:582px;width:181px;height:26px;background:#F5F5F5;border:1px solid #CCCEDB;border-top:none"></div>
<span class="t" style="left:1486px;top:587px;color:#0E70C0;letter-spacing:-0.1px">Explorador de soluciones</span>
<span class="t" style="left:1667px;top:587px;color:#444">Team Explorer</span>
<!-- PROPERTIES -->
<div class="a" style="left:1478px;top:617px;width:435px;height:376px;background:#F5F5F5;border:1px solid #CCCEDB"></div>
<div class="a" style="left:1479px;top:618px;width:433px;height:26px;background:#EEEEF2"></div>
<span class="t" style="left:1483px;top:623px;color:#444">Propiedades</span>
<div class="a" style="left:1576px;top:627px;width:265px;height:7px;background-image:radial-gradient(circle at 1px 1px,#B4B4B8 0.9px,transparent 1.2px),radial-gradient(circle at 3.5px 3.5px,#CDCDD2 0.9px,transparent 1.2px);background-size:5px 5px"></div>
<svg class="a" style="left:1850px;top:626px" width="10" height="6" viewBox="0 0 10 6"><path d="M0 0 H10 L5 6Z" fill="#1E1E1E"/></svg>
<svg class="a" style="left:1870px;top:622px" width="11" height="15" viewBox="0 0 11 15"><path d="M2.5 1 H8.5 M3.5 1 V8 H7.5 V1 M1 8.5 H10 M5.5 8.5 V14.5" stroke="#1E1E1E" stroke-width="1.4" fill="none"/><rect x="5.5" y="1" width="2" height="7" fill="#1E1E1E"/></svg>
<svg class="a" style="left:1891px;top:623px" width="12" height="12" viewBox="0 0 12 12"><path d="M1 1 L11 11 M11 1 L1 11" stroke="#1E1E1E" stroke-width="1.7"/></svg>
<div class="a" style="left:1479px;top:644px;width:433px;height:28px;background:#fff"></div>
<svg class="a" style="left:1899px;top:657px" width="8" height="4" viewBox="0 0 8 4"><path d="M0 0 H8 L4 4Z" fill="#717171"/></svg>
<div class="a" style="left:1479px;top:672px;width:433px;height:33px;background:#EEEEF2"></div>
<div class="a" style="left:1482px;top:674px;width:29px;height:28px;border:1px solid #3399FF"></div>
<svg class="a" style="left:1487px;top:679px" width="18" height="18" viewBox="0 0 18 18"><rect x="1" y="2" width="3.5" height="3.5" fill="none" stroke="#424242" stroke-width="1.2"/><rect x="1" y="11.5" width="3.5" height="3.5" fill="none" stroke="#424242" stroke-width="1.2"/><path d="M6 2.5 H16 M6 5 H16 M6 7.5 H16 M6 12 H16 M6 14.5 H16 M6 17 H10" stroke="#424242" stroke-width="1"/></svg>
<svg class="a" style="left:1516px;top:679px" width="19" height="18" viewBox="0 0 19 18"><rect x="1" y="0.5" width="7" height="7" fill="#F6F6F6" stroke="#555" stroke-width="1"/><text x="1.7" y="7" font-family="Liberation Sans" font-size="8" font-weight="bold" fill="#424242">A</text><text x="1.5" y="17" font-family="Liberation Sans" font-size="8" font-weight="bold" fill="#424242">Z</text><path d="M14 3 V15 M10.5 11.5 L14 15 L17.5 11.5" stroke="#00539C" stroke-width="2" fill="none"/></svg>
<div class="a" style="left:1543px;top:677px;width:1px;height:24px;background:#CCCEDB"></div>
<svg class="a" style="left:1551px;top:679px" width="19" height="19" viewBox="0 0 18 18"><path d="M1.5 16.5 L9 9" stroke="#B0B0B0" stroke-width="3.2" stroke-linecap="round"/><path d="M7.5 8 A5 5 0 0 1 14 1.5 L11 4.5 L13.5 7 L16.5 4 A5 5 0 0 1 10 10.5Z" fill="#B0B0B0"/></svg>
<div class="a" style="left:1479px;top:913px;width:433px;height:1px;background:#E8E8EC"></div>
<!-- STATUS BAR -->
<div class="a" style="left:0;top:1000px;width:1919px;height:30px;background:#007ACC"></div>
<div class="a" style="left:0;top:1030px;width:1919px;height:2px;background:#2B2B2B"></div>
<div class="a" style="left:312px;top:1030px;width:60px;height:2px;background:#555"></div>
<svg class="a" style="left:5px;top:1008px" width="21" height="15" viewBox="0 0 21 15"><path d="M5 1 H20 L16 14 H1Z" fill="none" stroke="#fff" stroke-width="1.5"/></svg>
<span class="t" style="left:35px;top:1007px;color:#fff;letter-spacing:-0.1px">Elementos guardados</span>
<svg class="a" style="left:1575px;top:1009px" width="11" height="14" viewBox="0 0 11 14"><path d="M5.5 13.5 V2 M1 6 L5.5 1.5 L10 6" stroke="#E0E0E0" stroke-width="2" fill="none"/></svg>
<span class="t" style="left:1597px;top:1007px;color:#fff;letter-spacing:0.15px">Agregar al control de código fuente</span>
<svg class="a" style="left:1843px;top:1013px" width="11" height="6" viewBox="0 0 11 6"><path d="M0 6 L5.5 0 L11 6Z" fill="#fff"/></svg>
<svg class="a" style="left:1880px;top:1006px" width="18" height="18" viewBox="0 0 18 18"><path d="M9 1 C5 1 3.5 4 3.5 7 V11 L1 14 H17 L14.5 11 V7 C14.5 4 13 1 9 1Z" fill="#E0E0E0"/><path d="M6.5 15.5 A2.5 2.5 0 0 0 11.5 15.5Z" fill="#E0E0E0"/></svg>
</body></html>
